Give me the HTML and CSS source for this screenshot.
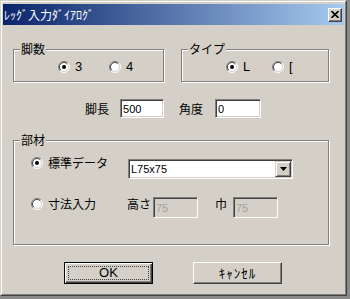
FILE: index.html
```html
<!DOCTYPE html>
<html lang="ja">
<head>
<meta charset="utf-8">
<title>ﾚｯｸﾞ入力ﾀﾞｲｱﾛｸﾞ</title>
<link rel="stylesheet" href="styles.css">
</head>
<body>
<div class="window">
  <div class="frame">
    <div class="titlebar">
      <span class="title">ﾚｯｸﾞ入力ﾀﾞｲｱﾛｸﾞ</span>
      <span class="close"><svg width="8" height="7" viewBox="0 0 8 7"><path d="M0.5 0 L7.5 7 M7.5 0 L0.5 7" stroke="#000" stroke-width="1.6"/></svg></span>
    </div>
    <div class="content">
      <div class="groups">
        <div class="group g1">
          <span class="legend">脚数</span>
          <label class="radio w51"><svg class="rb" width="12" height="12" viewBox="0 0 12 12"><circle cx="6" cy="6" r="5" fill="#fff"/><path d="M2.1 9.9 A5.5 5.5 0 0 1 9.9 2.1" fill="none" stroke="#808080"/><path d="M9.9 2.1 A5.5 5.5 0 0 1 2.1 9.9" fill="none" stroke="#fff"/><path d="M2.8 9.2 A4.5 4.5 0 0 1 9.2 2.8" fill="none" stroke="#404040"/><path d="M9.2 2.8 A4.5 4.5 0 0 1 2.8 9.2" fill="none" stroke="#d4d0c8"/><circle cx="6" cy="6" r="2" fill="#000"/></svg><span>3</span></label>
          <label class="radio"><svg class="rb" width="12" height="12" viewBox="0 0 12 12"><circle cx="6" cy="6" r="5" fill="#fff"/><path d="M2.1 9.9 A5.5 5.5 0 0 1 9.9 2.1" fill="none" stroke="#808080"/><path d="M9.9 2.1 A5.5 5.5 0 0 1 2.1 9.9" fill="none" stroke="#fff"/><path d="M2.8 9.2 A4.5 4.5 0 0 1 9.2 2.8" fill="none" stroke="#404040"/><path d="M9.2 2.8 A4.5 4.5 0 0 1 2.8 9.2" fill="none" stroke="#d4d0c8"/></svg><span>4</span></label>
        </div>
        <div class="group g2">
          <span class="legend">タイプ</span>
          <label class="radio w46"><svg class="rb" width="12" height="12" viewBox="0 0 12 12"><circle cx="6" cy="6" r="5" fill="#fff"/><path d="M2.1 9.9 A5.5 5.5 0 0 1 9.9 2.1" fill="none" stroke="#808080"/><path d="M9.9 2.1 A5.5 5.5 0 0 1 2.1 9.9" fill="none" stroke="#fff"/><path d="M2.8 9.2 A4.5 4.5 0 0 1 9.2 2.8" fill="none" stroke="#404040"/><path d="M9.2 2.8 A4.5 4.5 0 0 1 2.8 9.2" fill="none" stroke="#d4d0c8"/><circle cx="6" cy="6" r="2" fill="#000"/></svg><span>L</span></label>
          <label class="radio"><svg class="rb" width="12" height="12" viewBox="0 0 12 12"><circle cx="6" cy="6" r="5" fill="#fff"/><path d="M2.1 9.9 A5.5 5.5 0 0 1 9.9 2.1" fill="none" stroke="#808080"/><path d="M9.9 2.1 A5.5 5.5 0 0 1 2.1 9.9" fill="none" stroke="#fff"/><path d="M2.8 9.2 A4.5 4.5 0 0 1 9.2 2.8" fill="none" stroke="#404040"/><path d="M9.2 2.8 A4.5 4.5 0 0 1 2.8 9.2" fill="none" stroke="#d4d0c8"/></svg><span>[</span></label>
        </div>
      </div>

      <div class="row-len">
        <span class="lbl l-len">脚長</span>
        <span class="field f-len">500</span>
        <span class="lbl l-ang">角度</span>
        <span class="field f-ang">0</span>
      </div>

      <div class="group g3">
        <span class="legend">部材</span>
        <div class="row r1">
          <label class="radio wide"><svg class="rb" width="12" height="12" viewBox="0 0 12 12"><circle cx="6" cy="6" r="5" fill="#fff"/><path d="M2.1 9.9 A5.5 5.5 0 0 1 9.9 2.1" fill="none" stroke="#808080"/><path d="M9.9 2.1 A5.5 5.5 0 0 1 2.1 9.9" fill="none" stroke="#fff"/><path d="M2.8 9.2 A4.5 4.5 0 0 1 9.2 2.8" fill="none" stroke="#404040"/><path d="M9.2 2.8 A4.5 4.5 0 0 1 2.8 9.2" fill="none" stroke="#d4d0c8"/><circle cx="6" cy="6" r="2" fill="#000"/></svg><span>標準データ</span></label>
          <div class="combo">
            <span class="combo-text">L75x75</span>
            <span class="combo-btn"><svg width="7" height="4" viewBox="0 0 7 4"><path d="M0 0 H7 L3.5 4 Z" fill="#000"/></svg></span>
          </div>
        </div>
        <div class="row r2">
          <label class="radio wide2"><svg class="rb" width="12" height="12" viewBox="0 0 12 12"><circle cx="6" cy="6" r="5" fill="#fff"/><path d="M2.1 9.9 A5.5 5.5 0 0 1 9.9 2.1" fill="none" stroke="#808080"/><path d="M9.9 2.1 A5.5 5.5 0 0 1 2.1 9.9" fill="none" stroke="#fff"/><path d="M2.8 9.2 A4.5 4.5 0 0 1 9.2 2.8" fill="none" stroke="#404040"/><path d="M9.2 2.8 A4.5 4.5 0 0 1 2.8 9.2" fill="none" stroke="#d4d0c8"/></svg><span>寸法入力</span></label>
          <span class="lbl l-h">高さ</span>
          <span class="field disabled">75</span>
          <span class="lbl l-w">巾</span>
          <span class="field disabled">75</span>
        </div>
      </div>

      <div class="buttons">
        <div class="btn default"><span class="focus">OK</span></div>
        <div class="btn"><span class="cancel">ｷｬﾝｾﾙ</span></div>
      </div>
    </div>
  </div>
</div>
</body>
</html>
```

FILE: styles.css
```css
html, body {
  margin: 0;
  padding: 0;
}
body {
  width: 350px;
  height: 299px;
  background: #8a8a8a;
  font-family: "Liberation Sans", "Noto Sans CJK JP", sans-serif;
  font-size: 12px;
  color: #000;
  overflow: hidden;
}
.window {
  width: 347px;
  height: 296px;
  box-sizing: border-box;
  border: 1px solid;
  border-color: #d4d0c8 #404040 #404040 #d4d0c8;
  background: #d4d0c8;
}
.frame {
  height: 100%;
  box-sizing: border-box;
  border: 1px solid;
  border-color: #fff #808080 #808080 #fff;
  padding: 2px 1px 1px 1px;
}
.titlebar {
  height: 21px;
  display: flex;
  align-items: center;
  justify-content: space-between;
  background: linear-gradient(to right, #0a246a, #a6caf0);
  padding-left: 1px;
}
.title {
  color: #fff;
  font-family: "Noto Sans CJK JP", sans-serif;
  font-size: 12px;
  line-height: 14px;
}
.close {
  width: 14px;
  height: 14px;
  box-sizing: border-box;
  margin-right: 2px;
  background: #d4d0c8;
  border: 1px solid;
  border-color: #fff #404040 #404040 #fff;
  box-shadow: inset -1px -1px 0 #808080;
  display: flex;
  align-items: center;
  justify-content: center;
}
.close svg { display: block; margin-top: -1px; }

.content {
  position: relative;
}
.groups {
  display: flex;
  gap: 17px;
  margin-top: 24px;
  padding-left: 10px;
}
.group {
  position: relative;
  box-sizing: border-box;
  border: 1px solid #808080;
  box-shadow: inset 1px 1px 0 #fff, 1px 1px 0 #fff;
}
.legend {
  position: absolute;
  top: -8px;
  left: 6px;
  padding: 0 1px;
  background: #d4d0c8;
  font-family: "Noto Sans CJK JP", sans-serif;
  font-size: 12px;
  line-height: 14px;
}
.g1 {
  width: 151px;
  height: 33px;
  display: flex;
  align-items: center;
  padding: 3px 0 0 44px;
}
.g2 {
  width: 148px;
  height: 33px;
  display: flex;
  align-items: center;
  padding: 3px 0 0 44px;
}
.radio {
  display: flex;
  align-items: center;
  gap: 5px;
  line-height: 14px;
  font-size: 13px;
}
.rb { display: block; flex: none; }
.w51 { width: 51px; }
.w46 { width: 46px; }

.row-len {
  display: flex;
  align-items: center;
  margin-top: 17px;
  padding-left: 82px;
  height: 19px;
}
.lbl {
  font-family: "Noto Sans CJK JP", sans-serif;
  font-size: 12px;
  line-height: 14px;
}
.l-len { margin-right: 11px; }
.l-ang { margin-left: 15px; margin-right: 12px; }
.field {
  box-sizing: border-box;
  height: 19px;
  background: #fff;
  border: 1px solid;
  border-color: #808080 #fff #fff #808080;
  box-shadow: inset 1px 1px 0 #404040, inset -1px -1px 0 #d4d0c8;
  padding: 2px 0 0 2px;
  font-family: "Liberation Sans", sans-serif;
  font-size: 11px;
  line-height: 14px;
}
.f-len { width: 44px; }
.f-ang { width: 46px; }

.g3 {
  width: 316px;
  height: 105px;
  margin: 22px 0 0 10px;
  padding: 15px 0 0 17px;
}
.row {
  display: flex;
  align-items: flex-start;
}
.r1 { height: 23px; }
.r2 { margin-top: 18px; }
.wide { width: 97px; font-family: "Noto Sans CJK JP", sans-serif; font-size: 12px; }
.wide2 { width: 96px; font-family: "Noto Sans CJK JP", sans-serif; font-size: 12px; }
.combo {
  margin-top: 3px;
  width: 165px;
  height: 20px;
  box-sizing: border-box;
  background: #fff;
  border: 1px solid;
  border-color: #808080 #fff #fff #808080;
  box-shadow: inset 1px 1px 0 #404040, inset -1px -1px 0 #d4d0c8;
  display: flex;
  align-items: center;
  justify-content: space-between;
  padding: 1px 1px 1px 2px;
}
.combo-text {
  font-family: "Liberation Sans", sans-serif;
  font-size: 11px;
  line-height: 14px;
}
.combo-btn {
  width: 16px;
  height: 16px;
  box-sizing: border-box;
  background: #d4d0c8;
  border: 1px solid;
  border-color: #d4d0c8 #404040 #404040 #d4d0c8;
  box-shadow: inset 1px 1px 0 #fff, inset -1px -1px 0 #808080;
  display: flex;
  align-items: center;
  justify-content: center;
}
.combo-btn svg { display: block; }
.l-h { width: 26px; }
.l-w { margin-left: 17px; width: 18px; }
.disabled {
  width: 45px;
  height: 21px;
  background: #d4d0c8;
  color: #a0a0a0;
  padding-top: 3px;
}

.buttons {
  display: flex;
  gap: 40px;
  margin-top: 17px;
  padding-left: 61px;
}
.btn {
  width: 89px;
  height: 22px;
  box-sizing: border-box;
  border: 1px solid;
  border-color: #fff #404040 #404040 #fff;
  box-shadow: inset -1px -1px 0 #808080;
  display: flex;
  align-items: center;
  justify-content: center;
}
.btn.default {
  border: 1px solid #000;
  box-shadow: inset 1px 1px 0 #fff, inset -1px -1px 0 #404040, inset -2px -2px 0 #808080;
  padding: 3px;
}
.focus {
  flex: 1;
  align-self: stretch;
  border: 1px dotted #404040;
  display: flex;
  align-items: center;
  justify-content: center;
  font-family: "Liberation Sans", sans-serif;
  font-size: 13px;
  line-height: 14px;
}
.cancel {
  font-family: "Noto Sans CJK JP", sans-serif;
  font-size: 13px;
  letter-spacing: 1px;
  line-height: 14px;
}
```
